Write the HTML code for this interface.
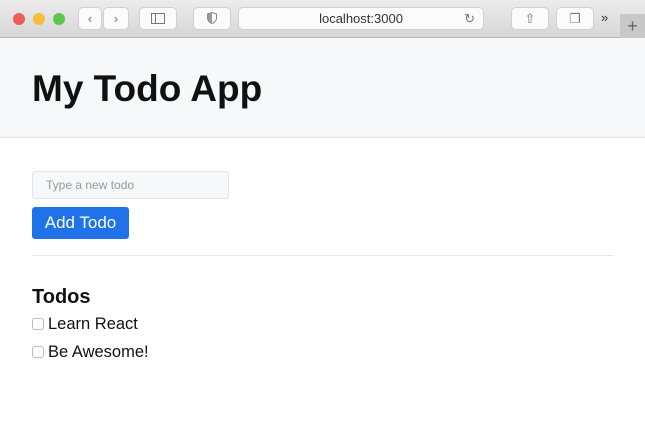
<!DOCTYPE html>
<html><head><meta charset="utf-8"><style>
*{margin:0;padding:0;box-sizing:border-box}
body{width:645px;height:448px;overflow:hidden;background:#fff;font-family:"Liberation Sans",sans-serif;position:relative}
.bar{position:absolute;left:0;top:0;width:645px;height:38px;background:linear-gradient(#ececec,#d6d6d6);border-bottom:1px solid #b8b8b8}
.dot{position:absolute;top:13px;width:12px;height:12px;border-radius:50%}
.btn{position:absolute;top:7px;height:23px;background:#fbfbfb;border:1px solid #d0d0d0;border-radius:5px;color:#777;font-size:13px;text-align:center;line-height:21px}
.hdr{position:absolute;top:38px;left:0;width:645px;height:100px;background:#f7f8f9;border-bottom:1px solid #e2e4e7}
h1{position:absolute;left:32px;top:67px;font-size:37px;font-weight:bold;color:#111;line-height:44px}
.inp{position:absolute;left:32px;top:171px;width:197px;height:28px;background:#f7f8f9;border:1px solid #e2e4e7;border-radius:3px;font-size:12px;color:#999;padding-left:13px;line-height:26px}
.add{position:absolute;left:32px;top:207px;width:97px;height:32px;background:#1f72e8;border-radius:3px;color:#fff;font-size:17px;line-height:32px;text-align:center}
.hr{position:absolute;left:32px;top:255px;width:581px;height:1px;background:#e4e6e9}
h2{position:absolute;left:32px;top:286px;font-size:20px;font-weight:bold;color:#111}
.item{position:absolute;left:32px;font-size:16.5px;color:#111}
.cb{display:inline-block;width:12px;height:12px;border:1px solid #bbb;border-radius:3px;vertical-align:-1px;margin-right:4px;background:#fff}
</style></head><body>
<div class="bar">
<div class="dot" style="left:13px;background:#ee5e57"></div>
<div class="dot" style="left:33px;background:#f6bd3a"></div>
<div class="dot" style="left:53px;background:#5fc54a"></div>
<div class="btn" style="left:78px;width:24px">‹</div>
<div class="btn" style="left:103px;width:26px">›</div>
<div class="btn" style="left:139px;width:38px"><svg width="14" height="11" style="margin-top:5px"><rect x="0.5" y="0.5" width="13" height="10" fill="none" stroke="#777"/><line x1="4.5" y1="0" x2="4.5" y2="11" stroke="#777"/></svg></div>
<div class="btn" style="left:193px;width:38px"><svg width="10" height="12" style="margin-top:4px"><path d="M5 0.5L9.5 2V6Q9.5 10 5 11.5Q0.5 10 0.5 6V2Z" fill="none" stroke="#888"/><path d="M5 0.5V11.5Q0.5 10 0.5 6V2Z" fill="#999"/></svg></div>
<div class="btn" style="left:238px;width:246px;color:#333">localhost:3000<span style="position:absolute;right:8px;color:#777">↻</span></div>
<div class="btn" style="left:511px;width:38px">⇧</div>
<div class="btn" style="left:556px;width:38px">❐</div>
<div style="position:absolute;left:601px;top:10px;font-size:13px;color:#333">»</div>
<div style="position:absolute;left:620px;top:14px;width:25px;height:25px;background:#c8c8c8;color:#666;text-align:center;font-size:18px;line-height:24px">+</div>
</div>
<div class="hdr"></div>
<h1>My Todo App</h1>
<div class="inp">Type a new todo</div>
<div class="add">Add Todo</div>
<div class="hr"></div>
<h2>Todos</h2>
<div class="item" style="top:315px"><span class="cb"></span>Learn React</div>
<div class="item" style="top:343px"><span class="cb"></span>Be Awesome!</div>
</body></html>
